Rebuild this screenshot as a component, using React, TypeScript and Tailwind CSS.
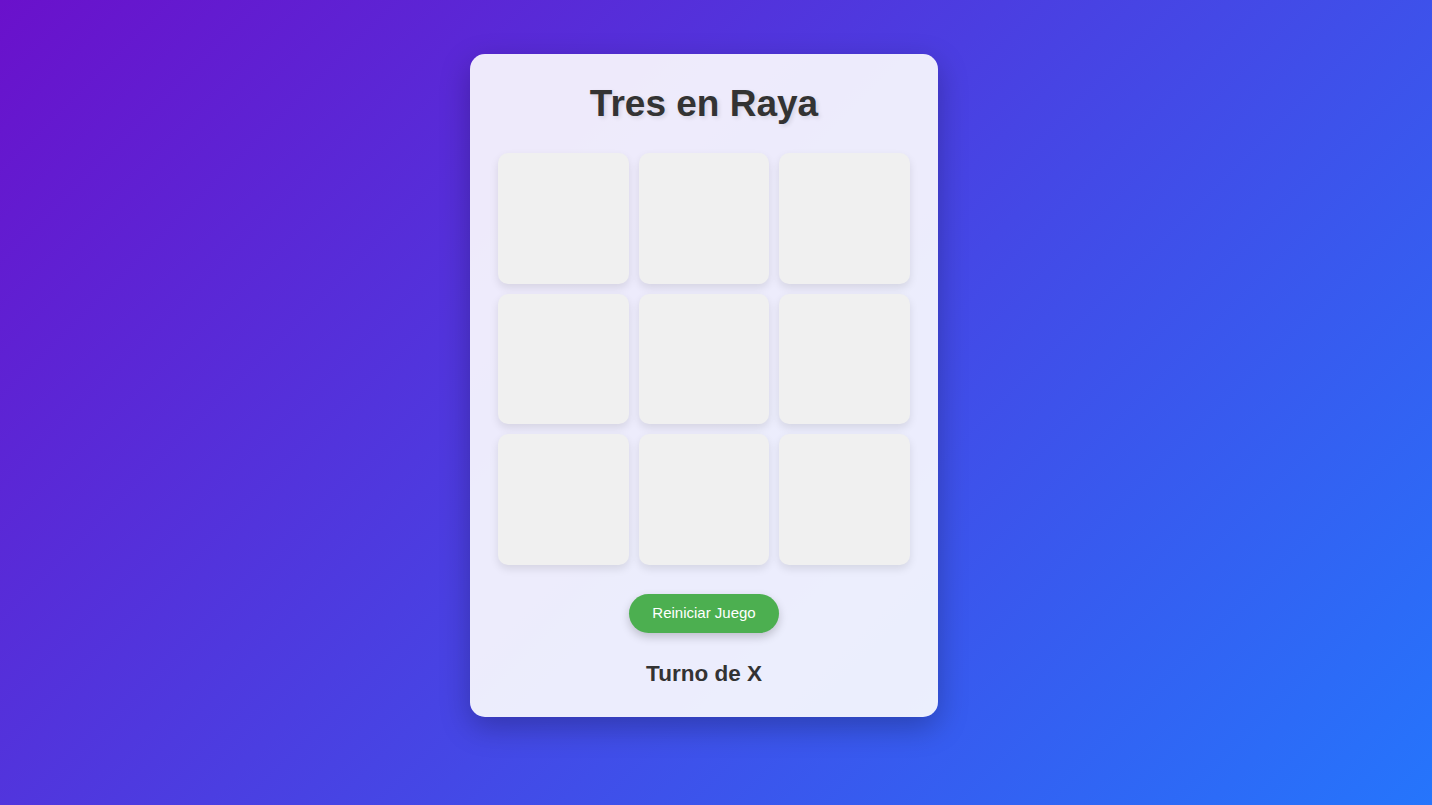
const cells = Array.from({ length: 9 }, (_, i) => i);

const App = () => {
  return (
    <div
      className="min-h-screen w-full flex justify-center items-start pt-[54px] pr-[24px] bg-[linear-gradient(135deg,#6a11cb_0%,#2575fc_100%)]"
      style={{ fontFamily: '"Liberation Sans", Arial, sans-serif' }}
    >
      <div className="w-[468px] rounded-[15px] bg-white/90 px-[28px] pt-[27px] pb-[31px] flex flex-col items-center shadow-[0_10px_30px_rgba(0,0,0,0.25)]">
        <h1 className="text-[37px] leading-[46px] font-bold text-[#333] [text-shadow:2px_2px_4px_rgba(0,0,0,0.1)]">
          Tres en Raya
        </h1>

        {/* board */}
        <div className="mt-[26px] w-full grid grid-cols-3 gap-[10px]">
          {cells.map((i) => (
            <button
              key={i}
              className="aspect-square rounded-[10px] bg-[#f0f0f0] shadow-[0_4px_8px_rgba(0,0,0,0.1)]"
            />
          ))}
        </div>

        <button className="mt-[29px] w-[150px] h-[39px] rounded-full bg-[#4caf50] text-white text-[15px] shadow-[0_4px_10px_rgba(0,0,0,0.2)]">
          Reiniciar Juego
        </button>

        <p className="mt-[28px] text-[22.5px] leading-[25px] font-bold text-[#333]">
          Turno de X
        </p>
      </div>
    </div>
  );
};

export default App;
